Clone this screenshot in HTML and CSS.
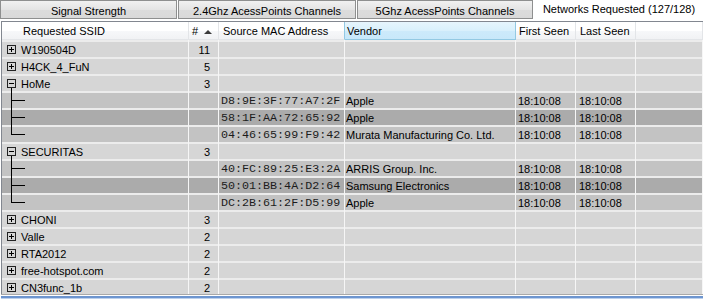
FILE: index.html
```html
<!DOCTYPE html>
<html>
<head>
<meta charset="utf-8">
<title>Networks Requested</title>
<link rel="stylesheet" href="styles.css">
</head>
<body>
<div class="app">
  <div class="tabs">
    <div class="tab t1">Signal Strength</div>
    <div class="tab t2">2.4Ghz AcessPoints Channels</div>
    <div class="tab t3">5Ghz AcessPoints Channels</div>
    <div class="tab sel">Networks Requested (127/128)</div>
  </div>
  <div class="page">
    <div class="lv">
      <div class="hdr">
        <div class="hc c1 h1">Requested SSID</div>
        <div class="hc c2 h2"># <span class="arrow"></span></div>
        <div class="hc c3 h3 hot-edge">Source MAC Address</div>
        <div class="hc c4 h4 hot">Vendor</div>
        <div class="hc c5 h5">First Seen</div>
        <div class="hc c6 h6">Last Seen</div>
        <div class="hc c7"></div>
      </div>

      <div class="row g">
        <div class="c c1"><svg class="tw" width="19" height="17" viewBox="0 0 19 17"><rect x="5.5" y="5.5" width="8" height="8" fill="none" stroke="#222"/><path d="M7 9.5H12M9.5 7V12" stroke="#000"/></svg><span class="t">W190504D</span></div>
        <div class="c c2">11</div><div class="c c3"></div><div class="c c4"></div><div class="c c5"></div><div class="c c6"></div><div class="c c7"></div>
      </div>
      <div class="row g">
        <div class="c c1"><svg class="tw" width="19" height="17" viewBox="0 0 19 17"><rect x="5.5" y="5.5" width="8" height="8" fill="none" stroke="#222"/><path d="M7 9.5H12M9.5 7V12" stroke="#000"/></svg><span class="t">H4CK_4_FuN</span></div>
        <div class="c c2">5</div><div class="c c3"></div><div class="c c4"></div><div class="c c5"></div><div class="c c6"></div><div class="c c7"></div>
      </div>
      <div class="row g">
        <div class="c c1"><svg class="tw" width="19" height="17" viewBox="0 0 19 17"><rect x="5.5" y="5.5" width="8" height="8" fill="none" stroke="#222"/><path d="M7 9.5H12M9.5 14V17" stroke="#000"/></svg><span class="t">HoMe</span></div>
        <div class="c c2">3</div><div class="c c3"></div><div class="c c4"></div><div class="c c5"></div><div class="c c6"></div><div class="c c7"></div>
      </div>
      <div class="row ch">
        <div class="c c1"><svg class="tw" width="24" height="17" viewBox="0 0 24 17"><path d="M9.5 0V17M10 9.5H23" stroke="#000"/></svg></div>
        <div class="c c2"></div><div class="c c3 mac">D8:9E:3F:77:A7:2F</div><div class="c c4">Apple</div><div class="c c5">18:10:08</div><div class="c c6">18:10:08</div><div class="c c7"></div>
      </div>
      <div class="row hi">
        <div class="c c1"><svg class="tw" width="24" height="17" viewBox="0 0 24 17"><path d="M9.5 0V17M10 9.5H23" stroke="#000"/></svg></div>
        <div class="c c2"></div><div class="c c3 mac">58:1F:AA:72:65:92</div><div class="c c4">Apple</div><div class="c c5">18:10:08</div><div class="c c6">18:10:08</div><div class="c c7"></div>
      </div>
      <div class="row ch">
        <div class="c c1"><svg class="tw" width="24" height="17" viewBox="0 0 24 17"><path d="M9.5 0V10M10 9.5H23" stroke="#000"/></svg></div>
        <div class="c c2"></div><div class="c c3 mac">04:46:65:99:F9:42</div><div class="c c4">Murata Manufacturing Co. Ltd.</div><div class="c c5">18:10:08</div><div class="c c6">18:10:08</div><div class="c c7"></div>
      </div>
      <div class="row g">
        <div class="c c1"><svg class="tw" width="19" height="17" viewBox="0 0 19 17"><rect x="5.5" y="5.5" width="8" height="8" fill="none" stroke="#222"/><path d="M7 9.5H12M9.5 14V17" stroke="#000"/></svg><span class="t">SECURITAS</span></div>
        <div class="c c2">3</div><div class="c c3"></div><div class="c c4"></div><div class="c c5"></div><div class="c c6"></div><div class="c c7"></div>
      </div>
      <div class="row ch">
        <div class="c c1"><svg class="tw" width="24" height="17" viewBox="0 0 24 17"><path d="M9.5 0V17M10 9.5H23" stroke="#000"/></svg></div>
        <div class="c c2"></div><div class="c c3 mac">40:FC:89:25:E3:2A</div><div class="c c4">ARRIS Group. Inc.</div><div class="c c5">18:10:08</div><div class="c c6">18:10:08</div><div class="c c7"></div>
      </div>
      <div class="row hi">
        <div class="c c1"><svg class="tw" width="24" height="17" viewBox="0 0 24 17"><path d="M9.5 0V17M10 9.5H23" stroke="#000"/></svg></div>
        <div class="c c2"></div><div class="c c3 mac">50:01:BB:4A:D2:64</div><div class="c c4">Samsung Electronics</div><div class="c c5">18:10:08</div><div class="c c6">18:10:08</div><div class="c c7"></div>
      </div>
      <div class="row ch">
        <div class="c c1"><svg class="tw" width="24" height="17" viewBox="0 0 24 17"><path d="M9.5 0V10M10 9.5H23" stroke="#000"/></svg></div>
        <div class="c c2"></div><div class="c c3 mac">DC:2B:61:2F:D5:99</div><div class="c c4">Apple</div><div class="c c5">18:10:08</div><div class="c c6">18:10:08</div><div class="c c7"></div>
      </div>
      <div class="row g">
        <div class="c c1"><svg class="tw" width="19" height="17" viewBox="0 0 19 17"><rect x="5.5" y="5.5" width="8" height="8" fill="none" stroke="#222"/><path d="M7 9.5H12M9.5 7V12" stroke="#000"/></svg><span class="t">CHONI</span></div>
        <div class="c c2">3</div><div class="c c3"></div><div class="c c4"></div><div class="c c5"></div><div class="c c6"></div><div class="c c7"></div>
      </div>
      <div class="row g">
        <div class="c c1"><svg class="tw" width="19" height="17" viewBox="0 0 19 17"><rect x="5.5" y="5.5" width="8" height="8" fill="none" stroke="#222"/><path d="M7 9.5H12M9.5 7V12" stroke="#000"/></svg><span class="t">Valle</span></div>
        <div class="c c2">2</div><div class="c c3"></div><div class="c c4"></div><div class="c c5"></div><div class="c c6"></div><div class="c c7"></div>
      </div>
      <div class="row g">
        <div class="c c1"><svg class="tw" width="19" height="17" viewBox="0 0 19 17"><rect x="5.5" y="5.5" width="8" height="8" fill="none" stroke="#222"/><path d="M7 9.5H12M9.5 7V12" stroke="#000"/></svg><span class="t">RTA2012</span></div>
        <div class="c c2">2</div><div class="c c3"></div><div class="c c4"></div><div class="c c5"></div><div class="c c6"></div><div class="c c7"></div>
      </div>
      <div class="row g">
        <div class="c c1"><svg class="tw" width="19" height="17" viewBox="0 0 19 17"><rect x="5.5" y="5.5" width="8" height="8" fill="none" stroke="#222"/><path d="M7 9.5H12M9.5 7V12" stroke="#000"/></svg><span class="t">free-hotspot.com</span></div>
        <div class="c c2">2</div><div class="c c3"></div><div class="c c4"></div><div class="c c5"></div><div class="c c6"></div><div class="c c7"></div>
      </div>
      <div class="row g">
        <div class="c c1"><svg class="tw" width="19" height="17" viewBox="0 0 19 17"><rect x="5.5" y="5.5" width="8" height="8" fill="none" stroke="#222"/><path d="M7 9.5H12M9.5 7V12" stroke="#000"/></svg><span class="t">CN3func_1b</span></div>
        <div class="c c2">2</div><div class="c c3"></div><div class="c c4"></div><div class="c c5"></div><div class="c c6"></div><div class="c c7"></div>
      </div>
    </div>
    <div class="bottom"></div>
  </div>
</div>
</body>
</html>
```

FILE: styles.css
```css
html, body {
  margin: 0;
  padding: 0;
  background: #ffffff;
}

body {
  font-family: "Liberation Sans", Arial, sans-serif;
  font-size: 11px;
  color: #000;
}

.app {
  width: 703px;
  height: 299px;
  overflow: hidden;
  background: #ffffff;
}

/* ---------- Tabs ---------- */
.tabs {
  display: flex;
  height: 19px;
}

.tab {
  box-sizing: border-box;
  height: 19px;
  border: 1px solid #8e8f8f;
  background: linear-gradient(#f1f1f1, #e4e4e4 50%, #dcdcdc 51%, #d9d9d9);
  text-align: center;
  line-height: 18px;
  padding-top: 1px;
  white-space: nowrap;
  overflow: hidden;
}

.t1 { width: 177px; }
.t2 { width: 178px; margin-left: 1px; }
.t3 { width: 176px; margin-left: 1px; }

.tab.sel {
  flex: 1;
  border: none;
  background: #ffffff;
  line-height: 18px;
  padding-top: 0;
  padding-left: 2px;
}

/* ---------- Page / ListView ---------- */
.page {
  padding-top: 2px;
}

.lv {
  box-sizing: border-box;
  margin-left: 1px;
  height: 273px;
  border-left: 1px solid #828790;
  border-top: 1px solid #828790;
  overflow: hidden;
  background: #ffffff;
}

.hdr {
  display: flex;
  height: 18px;
}

.hc {
  box-sizing: border-box;
  height: 18px;
  padding-top: 2px;
  line-height: 15px;
  border-right: 1px solid #e3e5e8;
  border-bottom: 1px solid #e3e5e8;
  background: linear-gradient(#ffffff, #ffffff 50%, #f7f8fa 51%, #f1f2f4);
  white-space: nowrap;
  overflow: hidden;
}

.h1 { padding-left: 21px; }
.h2 { padding-left: 3px; }
.h3 { padding-left: 4px; }
.h4 { padding-left: 2px; }
.h5 { padding-left: 3px; }
.h6 { padding-left: 4px; }

.hc.hot-edge {
  border-right-color: #93c9e3;
}

.hc.hot {
  background: linear-gradient(#e6f5fd, #d9f0fc 50%, #cdeafb 51%, #c8e8fa);
  border-right-color: #93c9e3;
  border-bottom-color: #93c9e3;
}

.arrow {
  display: inline-block;
  width: 0;
  height: 0;
  border-left: 4px solid transparent;
  border-right: 4px solid transparent;
  border-bottom: 4px solid #3a3a3a;
  margin-left: 3px;
  vertical-align: 1px;
}

/* columns */
.c1 { width: 187px; flex: none; }
.c2 { width: 30px; flex: none; }
.c3 { width: 126px; flex: none; }
.c4 { width: 171px; flex: none; }
.c5 { width: 60px; flex: none; }
.c6 { width: 60px; flex: none; }
.c7 { flex: 1; }

/* ---------- Rows ---------- */
.row {
  display: flex;
  height: 17px;
  --bg: #d6d6d6;
  background: linear-gradient(to bottom, #ececec 0, #ececec 2px, var(--bg) 2px);
}

.row.g { --bg: #d6d6d6; }
.row.ch { --bg: #c3c3c3; }
.row.hi { --bg: #ababab; }

.c {
  box-sizing: border-box;
  height: 17px;
  padding-top: 3px;
  line-height: 14px;
  border-right: 1px solid #f6f6f6;
  white-space: nowrap;
  overflow: hidden;
}

.row .c1 {
  display: flex;
  padding-top: 0;
}

.tw {
  flex: none;
  display: block;
}

.t {
  padding-top: 3px;
  line-height: 14px;
}

.row .c2 {
  text-align: right;
  padding-right: 8px;
}

.row .c3 { padding-left: 2px; }
.row .c4 { padding-left: 1px; }
.row .c5 { padding-left: 2px; }
.row .c6 { padding-left: 3px; }

.mac {
  font-family: "Liberation Mono", "Courier New", monospace;
  font-size: 11.7px;
  color: #1c1c1c;
}

/* ---------- bottom edge ---------- */
.bottom {
  height: 5px;
  margin-left: 1px;
  background: linear-gradient(to bottom,
    #a9a9a9 0, #a9a9a9 1px,
    #ffffff 1px, #ffffff 2px,
    #6d95cf 2px, #6d95cf 4px,
    #bcd0ec 4px);
}
```
